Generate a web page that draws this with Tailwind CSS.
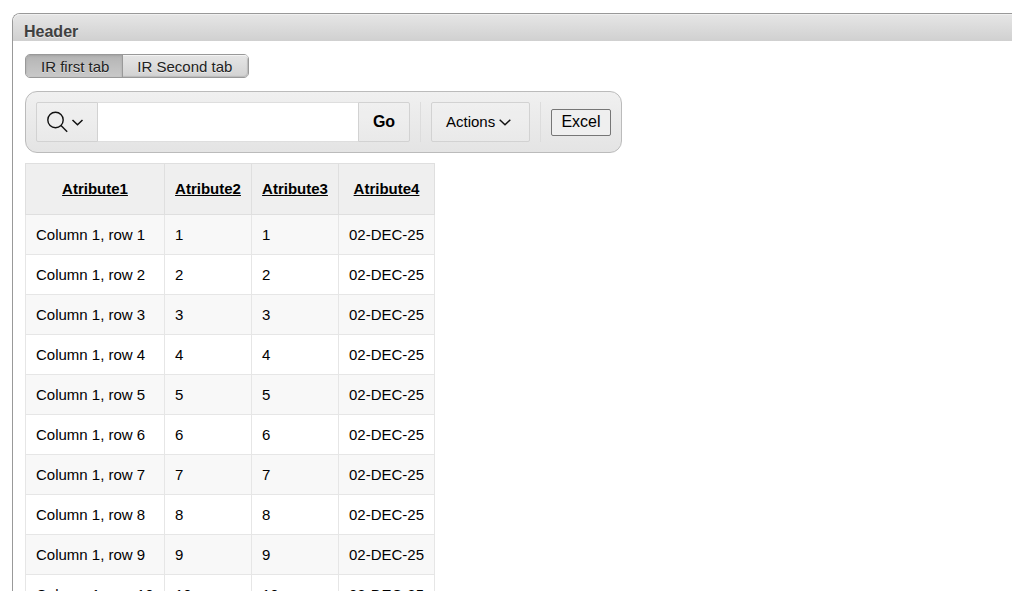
<!DOCTYPE html>
<html lang="en">
<head>
<meta charset="utf-8">
<meta name="viewport" content="width=device-width, initial-scale=1">
<title>Header</title>
<script src="https://cdn.jsdelivr.net/npm/@tailwindcss/browser@4"></script>
</head>
<body class="h-screen overflow-hidden bg-white font-['Liberation_Sans',Arial,sans-serif] text-[15px] leading-5 text-black">
<section class="mt-[13px] ml-3 min-h-screen rounded-tl-lg border-t border-l border-[#999]">
  <header class="rounded-tl-[7px] bg-linear-to-b from-[#e6e6e6] to-[#d0d0d0] pt-[9px] pl-[11px] shadow-[inset_0_1px_0_#f0f0f0]">
    <h1 class="text-base leading-[18px] font-bold text-[#404040] [text-shadow:0_1px_0_rgba(255,255,255,.5)]">Header</h1>
  </header>
  <main class="flex flex-col items-start px-3 pt-[13px]">
    <nav class="flex h-6 rounded-[5px] border border-[#999] text-[#222] [text-shadow:0_1px_0_rgba(255,255,255,.5)]">
      <a href="#first" class="flex items-center rounded-l-sm border-r border-[#999] bg-linear-to-b from-[#b4b4b4] to-[#c9c9c9] pr-[13px] pl-[15px] pt-px shadow-[inset_0_1px_2px_#a3a3a3]">IR first tab</a>
      <a href="#second" class="flex items-center rounded-r-sm bg-linear-to-b from-[#e6e6e6] to-[#d2d2d2] pr-4 pl-3.5 pt-px shadow-[inset_0_1px_0_#f4f4f4,inset_-1px_-1px_1px_#bbb]">IR Second tab</a>
    </nav>
    <form class="mt-[13px] flex items-center rounded-xl border border-[#bbb] bg-linear-to-b from-[#f0f0f0] to-[#e4e4e4] p-2.5" onsubmit="return false">
      <button type="button" aria-label="Select columns to search" class="flex h-10 w-[62px] items-center gap-px rounded-l-xs border border-[#d2d2d2] bg-white/15 pl-[9px]">
        <svg class="size-6" viewBox="0 0 24 24" fill="none" stroke="#111" stroke-width="1.4"><circle cx="9.500" cy="10" r="7.700"/><path d="M15 15.500 21.200 21.700"/></svg>
        <svg class="size-3.5" viewBox="0 0 14 14" fill="none" stroke="#111" stroke-width="1.500"><path d="M1.500 5 6.500 9.800 11.500 5"/></svg>
      </button>
      <input type="text" aria-label="Search" class="h-10 w-[260px] border-y border-[#dedede] bg-white px-2 outline-none">
      <button type="submit" class="h-10 w-[52px] rounded-r-xs border border-[#d2d2d2] bg-white/15 text-base font-bold">Go</button>
      <span class="mx-2.5 h-10 w-px bg-[#dcdcdc]"></span>
      <button type="button" class="flex h-10 w-[99px] items-center gap-0.5 rounded-xs border border-[#d2d2d2] bg-white/15 pl-3.5">Actions
        <svg class="size-3.5" viewBox="0 0 14 14" fill="none" stroke="#111" stroke-width="1.500"><path d="M2.700 4.800 8 9.800 13.300 4.800"/></svg>
      </button>
      <span class="mx-2.5 h-10 w-px bg-[#dcdcdc]"></span>
      <button type="button" class="h-[27px] w-[60px] rounded-xs border border-[#767676] bg-[#efefef] text-base leading-6">Excel</button>
    </form>
    <table class="mt-2.5 border-collapse">
      <thead>
        <tr class="h-[51px] bg-[#efefef]">
          <th class="w-[139px] border border-[#dfdfdf] px-2.5"><a href="#a1" class="underline">Atribute1</a></th>
          <th class="w-[87px] border border-[#dfdfdf] px-2.5"><a href="#a2" class="underline">Atribute2</a></th>
          <th class="w-[87px] border border-[#dfdfdf] px-2.5"><a href="#a3" class="underline">Atribute3</a></th>
          <th class="w-24 border border-[#dfdfdf] px-2.5"><a href="#a4" class="underline">Atribute4</a></th>
        </tr>
      </thead>
      <tbody id="rows"></tbody>
    </table>
  </main>
</section>
<template id="row">
  <tr class="h-10 odd:bg-[#f8f8f8]">
    <td class="border border-[#e6e6e6] px-2.5 whitespace-nowrap"></td>
    <td class="border border-[#e6e6e6] px-2.5"></td>
    <td class="border border-[#e6e6e6] px-2.5"></td>
    <td class="border border-[#e6e6e6] px-2 text-center whitespace-nowrap">02-DEC-25</td>
  </tr>
</template>
<script>
const body = document.getElementById('rows');
const template = document.getElementById('row');
for (let n = 1; n <= 10; n++) {
  const row = template.content.cloneNode(true);
  const cells = row.querySelectorAll('td');
  cells[0].textContent = 'Column 1, row ' + n;
  cells[1].textContent = n;
  cells[2].textContent = n;
  body.append(row);
}
</script>
</body>
</html>
